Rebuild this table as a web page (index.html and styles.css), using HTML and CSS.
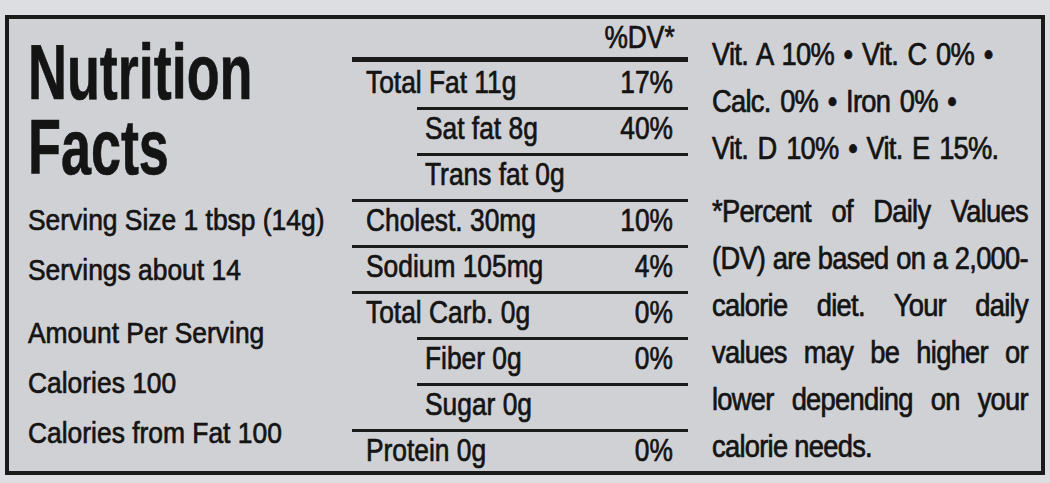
FILE: index.html
```html
<!DOCTYPE html>
<html lang="en">
<head>
    <meta charset="UTF-8">
    <meta name="viewport" content="width=device-width, initial-scale=1.0">
    <title>Nutrition Facts</title>
    <link rel="stylesheet" href="styles.css">
</head>
<body>

    <div class="label">
        <div class="col-main">
            <h1 class="title">Nutrition<br>Facts</h1>
            <div class="serving">
                <p>Serving Size 1 tbsp (14g)</p>
                <p>Servings about 14</p>
            </div>
            <div class="amount">
                <p>Amount Per Serving</p>
                <p>Calories 100</p>
                <p>Calories from Fat 100</p>
            </div>
        </div>

        <div class="col-table">
            <div class="dv-head"><span>%DV*</span></div>
            <div class="row first"><span>Total Fat 11g</span><span>17%</span></div>
            <div class="row sub"><span>Sat fat 8g</span><span>40%</span></div>
            <div class="row sub"><span>Trans fat 0g</span></div>
            <div class="row"><span>Cholest. 30mg</span><span>10%</span></div>
            <div class="row"><span>Sodium 105mg</span><span>4%</span></div>
            <div class="row"><span>Total Carb. 0g</span><span>0%</span></div>
            <div class="row sub"><span>Fiber 0g</span><span>0%</span></div>
            <div class="row sub"><span>Sugar 0g</span></div>
            <div class="row"><span>Protein 0g</span><span>0%</span></div>
        </div>

        <div class="col-notes">
            <div class="notes-inner">
                <div class="vitamins">
                    <p>Vit. A 10% • Vit. C 0% •</p>
                    <p>Calc. 0% • Iron 0% •</p>
                    <p>Vit. D 10% • Vit. E 15%.</p>
                </div>
                <div class="footnote">
                    <span class="line">*Percent of Daily Values</span>
                    <span class="line">(DV) are based on a 2,000-</span>
                    <span class="line">calorie diet. Your daily</span>
                    <span class="line">values may be higher or</span>
                    <span class="line">lower depending on your</span>
                    <span class="line last">calorie needs.</span>
                </div>
            </div>
        </div>
    </div>

</body>
</html>
```

FILE: styles.css
```css
body {
    margin: 0;
    background-color: #dddee1;
    font-family: "Liberation Sans", Arial, sans-serif;
    color: #141414;
    -webkit-text-stroke: 0.7px #141414;
}
p {
    margin: 0;
}
.label {
    width: 1040px;
    height: 460px;
    box-sizing: border-box;
    margin: 15px 0 0 5px;
    border: 4px solid #1b1b1b;
    background: #d0d1d5;
    display: grid;
    grid-template-columns: 343px 336px 353px;
    overflow: hidden;
}

/* left column - the printed type is condensed, so squeeze it */
.col-main {
    padding: 16px 0 0 19px;
    font-size: 30px;
    line-height: 50px;
    white-space: nowrap;
}
.title {
    margin: 0;
    font-size: 77px;
    line-height: 75px;
    font-weight: bold;
    transform: scaleX(0.7);
    transform-origin: left top;
}
.serving, .amount {
    transform: scaleX(0.88);
    transform-origin: left top;
}
.serving {
    margin-top: 10px;
}
.amount {
    margin-top: 13px;
}

/* middle table */
.col-table {
    font-size: 31px;
    line-height: 38px;
    white-space: nowrap;
}
.dv-head {
    height: 38px;
    text-align: right;
    padding-right: 13px;
    border-bottom: 5px solid #1b1b1b;
}
.dv-head span, .row span {
    display: inline-block;
    transform: scaleX(0.85);
    transform-origin: left;
}
.dv-head span, .row span + span {
    transform-origin: right;
}
.row {
    display: flex;
    justify-content: space-between;
    padding: 0 15px 5px 14px;
    border-top: 3px solid #1b1b1b;
}
.row.first {
    border-top: none;
    line-height: 42px;
    padding-bottom: 3px;
}
.row.sub {
    margin-left: 65px;
    padding-left: 8px;
}
.row:last-child {
    padding-bottom: 0;
}

/* right column */
.col-notes {
    padding: 12px 13px 0 24px;
    font-size: 31px;
    line-height: 47px;
}
.notes-inner {
    width: 359px;
    letter-spacing: -0.8px;
    transform: scaleX(0.88);
    transform-origin: left top;
}
.vitamins p {
    word-spacing: 3px;
    white-space: nowrap;
}
.footnote {
    margin-top: 16px;
}
.footnote .line {
    display: block;
    text-align: justify;
    text-align-last: justify;
}
.footnote .line.last {
    text-align-last: left;
}
```
